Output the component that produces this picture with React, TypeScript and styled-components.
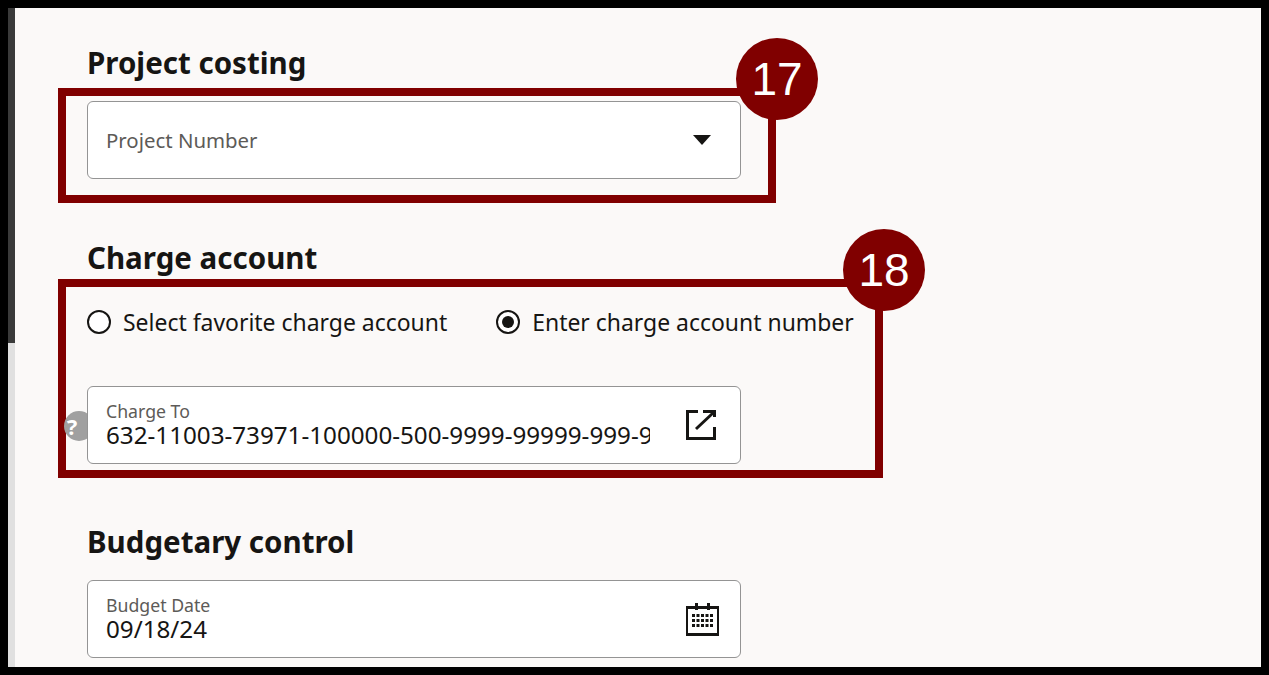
import React from "react";
import styled, { createGlobalStyle } from "styled-components";

const Global = createGlobalStyle`
  html, body { margin: 0; padding: 0; height: 100%; background: #000; overflow: hidden; }
  * { box-sizing: border-box; }
`;
const Frame = styled.div`
  width: 1269px; height: 675px; padding: 8px; background: #000; display: flex;
`;
const Scrollbar = styled.div`
  width: 7px; height: 100%; background: #e0e0e0; flex: none;
`;
const Thumb = styled.div`
  height: 335px; background: #3a3a3a;
`;
const Page = styled.main`
  flex: 1; height: 100%; overflow: hidden; background: #fbf9f8; padding: 37px 0 0 72px;
  font-family: "Noto Sans", "Open Sans", sans-serif; color: #161513;
`;
const Section = styled.section<{ $gap: number }>`
  position: relative; width: 654px; margin-bottom: ${p => p.$gap}px;
`;
const Heading = styled.h2<{ $gap: number }>`
  margin: 0 0 ${p => p.$gap}px; font-size: 29.5px; line-height: 36px; font-weight: 700; color: #161513;
`;
const FieldRow = styled.div`
  position: relative;
`;
const Field = styled.div<{ $end: number }>`
  position: relative; z-index: 2; height: 78px; background: #fff; border: 1px solid #949494; border-radius: 6px;
  display: flex; align-items: center; padding: 0 ${p => p.$end}px 0 18px;
`;
const FieldBody = styled.div`
  flex: 1; min-width: 0; display: flex; flex-direction: column;
`;
const Placeholder = styled.span`
  flex: 1; font-size: 20.4px; line-height: 28px; color: #5d5b58;
`;
const FieldLabel = styled.span`
  font-size: 17.7px; line-height: 20px; color: #5d5b58;
`;
const FieldValue = styled.span`
  max-width: 544px; overflow: hidden; white-space: nowrap; font-size: 24.2px; line-height: 28px; color: #161513;
`;
const RadioRow = styled.div`
  display: flex; height: 44px; align-items: center; margin: 0 0 42px; gap: 49px; white-space: nowrap;
`;
const RadioOption = styled.label`
  display: flex; align-items: center; gap: 12px; font-size: 22.95px; line-height: 30px; color: #161513;
`;
const RadioMark = styled.span<{ $on?: boolean }>`
  width: 24px; height: 24px; border-radius: 50%; border: 2px solid #161513; background: #fff;
  display: flex; align-items: center; justify-content: center; flex: none;
  &::after {
    content: ""; width: 12px; height: 12px; border-radius: 50%;
    background: ${p => (p.$on ? "#161513" : "transparent")};
  }
`;
const Highlight = styled.div<{ $top: number; $w: number; $h: number }>`
  position: absolute; left: -29px; top: ${p => p.$top}px; width: ${p => p.$w}px; height: ${p => p.$h}px;
  border: 8px solid #800000; pointer-events: none;
`;
const Badge = styled.div<{ $left: number; $top: number }>`
  position: absolute; z-index: 3; left: ${p => p.$left}px; top: ${p => p.$top}px; width: 82px; height: 82px;
  border-radius: 50%; background: #800000; color: #fff;
  display: flex; align-items: center; justify-content: center;
  font-family: "Liberation Sans", Arial, sans-serif; font-size: 46px; line-height: 1;
`;
const Help = styled.div`
  position: absolute; z-index: 1; left: -23px; top: 25px; width: 30px; height: 30px; padding-right: 14px; border-radius: 50%;
  background: #a0a0a0; color: #fff; font-size: 22px; font-weight: 700; line-height: 30px; text-align: center;
`;

const Caret = () => (
  <svg width="18" height="10" viewBox="0 0 18 10"><path d="M0 0h18L9 10z" fill="#161513" /></svg>
);
const ExternalIcon = () => (
  <svg width="30" height="30" viewBox="0 0 30 30" fill="none" stroke="#161513" strokeWidth="3">
    <path d="M12 1.500H1.500v27h27V17" />
    <path d="M10 19 27.500 2.500" />
    <path d="M17 1.500h11.500V7" />
  </svg>
);
const CalendarIcon = () => (
  <svg width="33" height="33" viewBox="0 0 33 33">
    <path d="M1 4h31v28H1z" fill="#fff" stroke="#161513" strokeWidth="2" />
    <path d="M0 3h33v3H0zM0 30h33v3H0z" fill="#161513" />
    <path d="M9 0h3v7H9zM21 0h3v7h-3z" fill="#161513" />
    {[11, 16, 21].flatMap(y =>
      [6, 10.5, 15, 19.5, 24].map(x => <rect key={`${x}-${y}`} x={x} y={y} width="3" height="3" fill="#161513" />)
    )}
  </svg>
);

export default function App() {
  return (
    <Frame>
      <Global />
      <Scrollbar><Thumb /></Scrollbar>
      <Page>
        <Section $gap={61}>
          <Heading $gap={20}>Project costing</Heading>
          <Field $end={29}>
            <Placeholder>Project Number</Placeholder>
            <Caret />
          </Field>
          <Highlight $top={43} $w={718} $h={115} />
          <Badge $left={649} $top={-7}>17</Badge>
        </Section>
        <Section $gap={60}>
          <Heading $gap={24}>Charge account</Heading>
          <RadioRow>
            <RadioOption><RadioMark />Select favorite charge account</RadioOption>
            <RadioOption><RadioMark $on />Enter charge account number</RadioOption>
          </RadioRow>
          <FieldRow>
            <Help>?</Help>
            <Field $end={24}>
              <FieldBody>
                <FieldLabel>Charge To</FieldLabel>
                <FieldValue>632-11003-73971-100000-500-9999-99999-999-9999</FieldValue>
              </FieldBody>
              <ExternalIcon />
            </Field>
          </FieldRow>
          <Highlight $top={39} $w={825} $h={199} />
          <Badge $left={756} $top={-11}>18</Badge>
        </Section>
        <Section $gap={0}>
          <Heading $gap={20}>Budgetary control</Heading>
          <Field $end={21}>
            <FieldBody>
              <FieldLabel>Budget Date</FieldLabel>
              <FieldValue>09/18/24</FieldValue>
            </FieldBody>
            <CalendarIcon />
          </Field>
        </Section>
      </Page>
    </Frame>
  );
}
